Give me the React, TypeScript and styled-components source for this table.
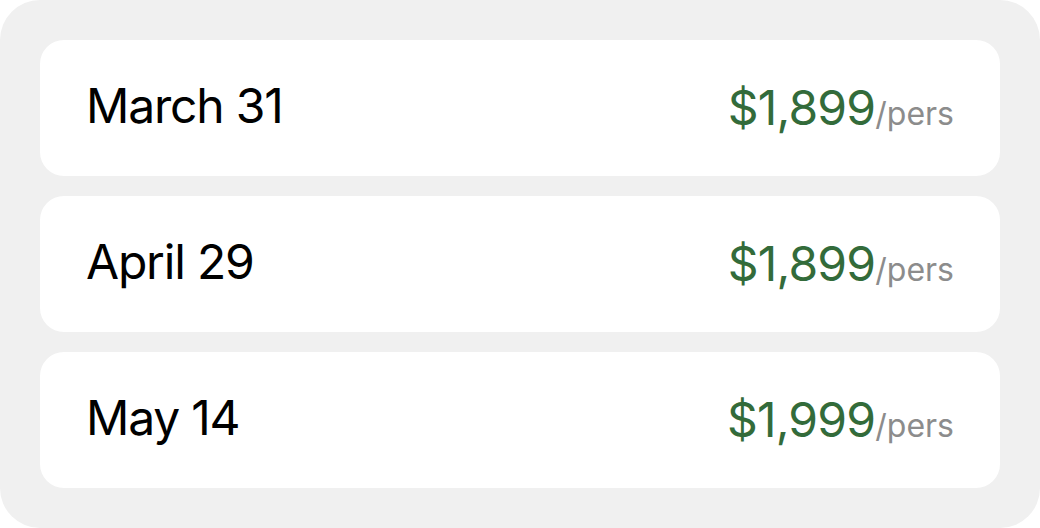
import React from "react";
import styled, { createGlobalStyle } from "styled-components";

const Global = createGlobalStyle`
  html, body { margin: 0; padding: 0; background: #ffffff; }
  body { font-family: Inter, "Noto Sans", sans-serif; }
`;

const Panel = styled.div`
  width: 1040px;
  height: 528px;
  box-sizing: border-box;
  background: #f0f0f0;
  border-radius: 40px;
  padding: 40px;
  display: flex;
  flex-direction: column;
  gap: 20px;
`;

const Row = styled.div`
  height: 136px;
  background: #ffffff;
  border-radius: 24px;
  display: flex;
  align-items: center;
  justify-content: space-between;
  padding: 0 46px 6px 46px;
  box-sizing: border-box;
`;

const DateLabel = styled.div`
  font-size: 48px;
  font-weight: 400;
  color: #000000;
  letter-spacing: -1.2px;
`;

const Price = styled.div`
  display: flex;
  align-items: baseline;
  margin-top: 4px;
`;

const Amount = styled.span`
  font-size: 48px;
  color: #336b3a;
  letter-spacing: -0.8px;
`;

const Unit = styled.span`
  font-size: 32px;
  color: #8c8c8c;
`;

const rows = [
  { date: "March 31", price: "$1,899" },
  { date: "April 29", price: "$1,899" },
  { date: "May 14", price: "$1,999" },
];

export default function App() {
  return (
    <>
      <Global />
      <Panel>
        {rows.map((r) => (
          <Row key={r.date}>
            <DateLabel>{r.date}</DateLabel>
            <Price>
              <Amount>{r.price}</Amount>
              <Unit>/pers</Unit>
            </Price>
          </Row>
        ))}
      </Panel>
    </>
  );
}
